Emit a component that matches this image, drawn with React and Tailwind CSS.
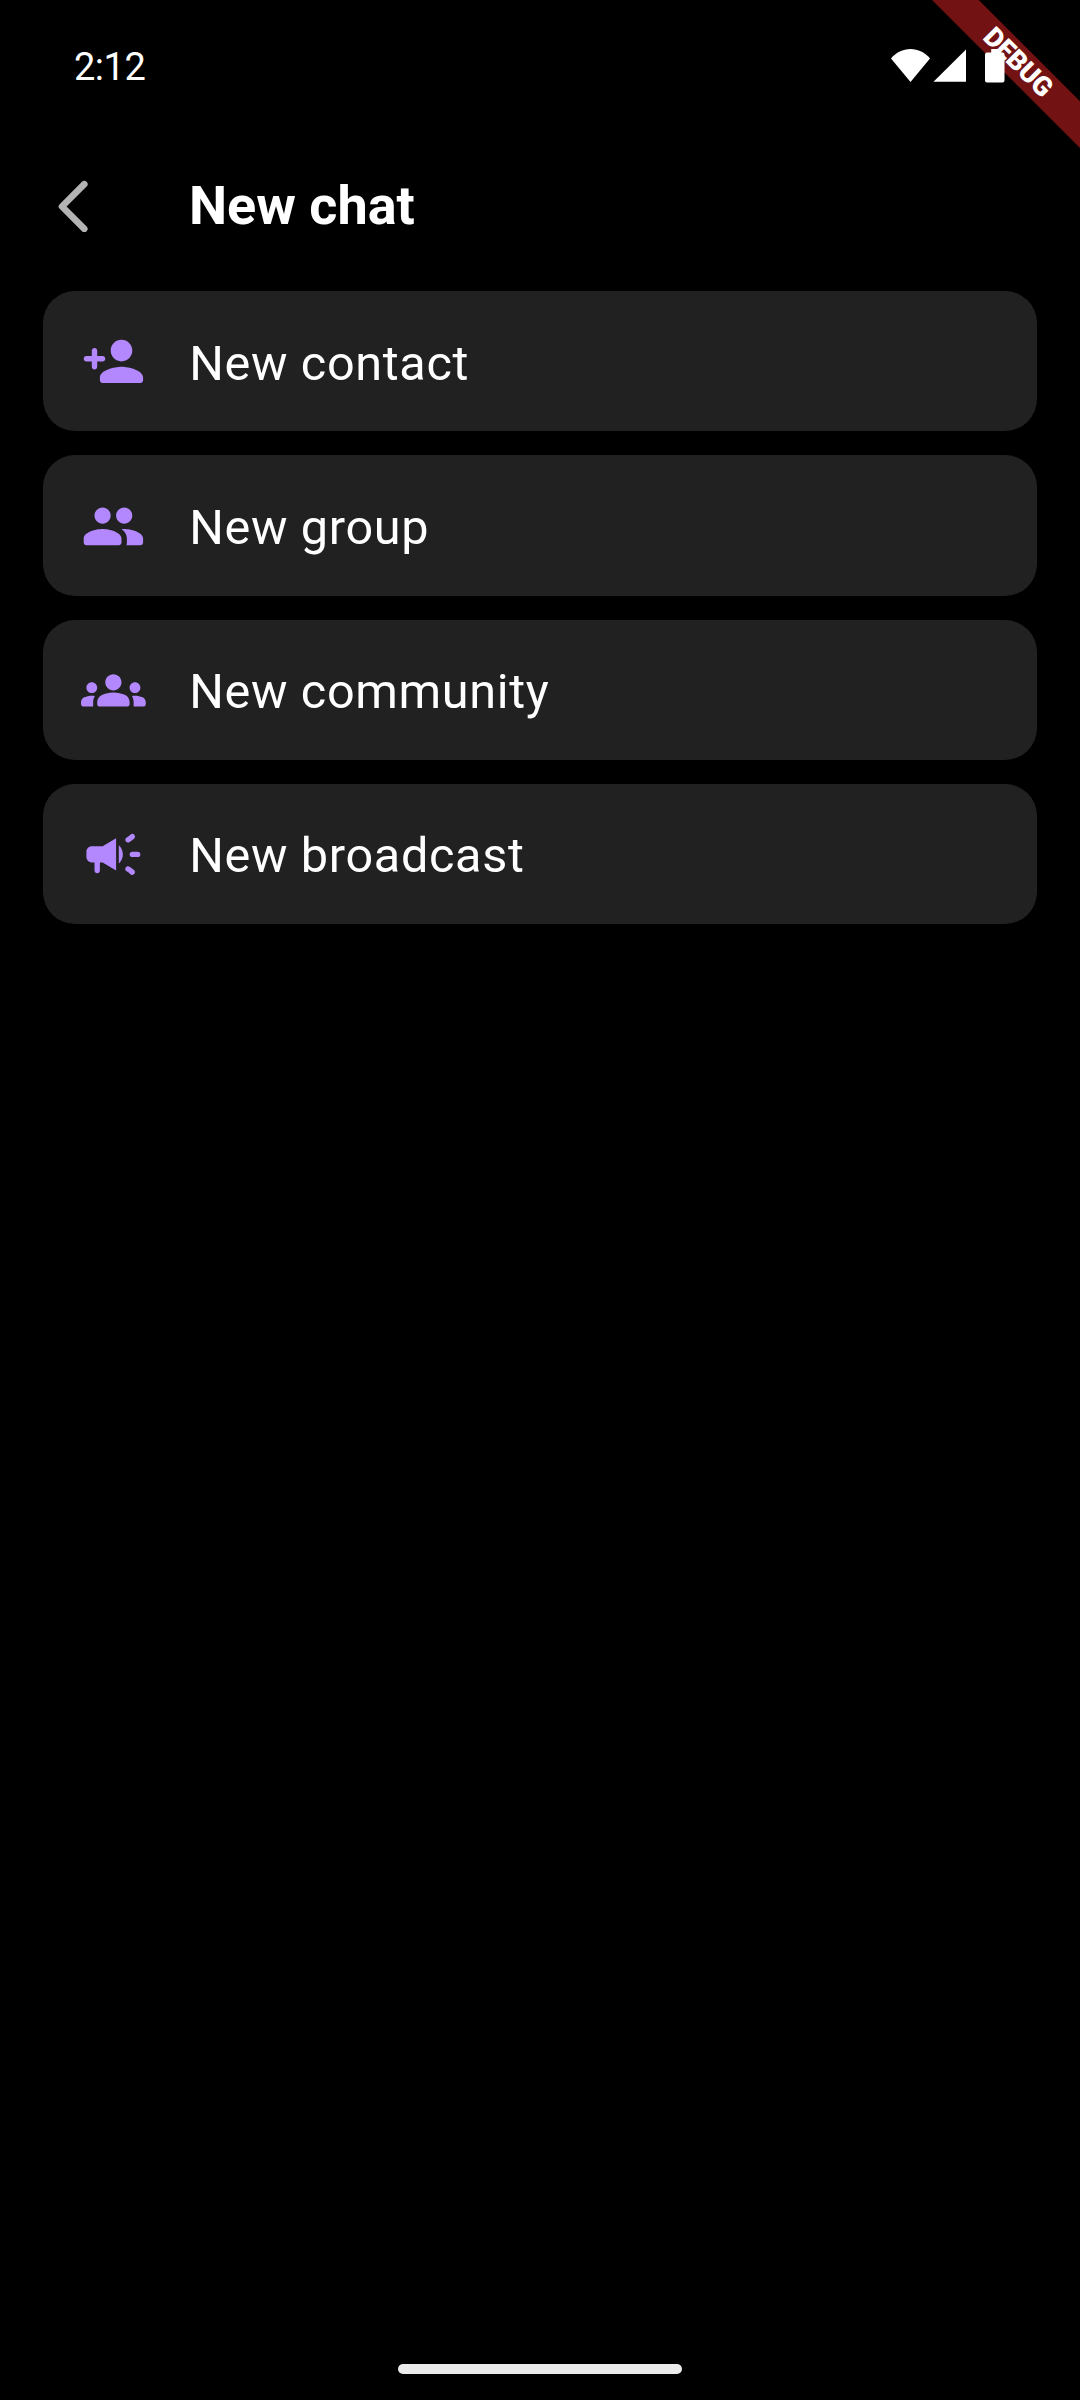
const PERSON_ADD =
  'M15 12c2.21 0 4-1.79 4-4s-1.79-4-4-4-4 1.79-4 4 1.79 4 4 4zm-9-2V8c0-.55-.45-1-1-1s-1 .45-1 1v2H2c-.55 0-1 .45-1 1s.45 1 1 1h2v2c0 .55.45 1 1 1s1-.45 1-1v-2h2c.55 0 1-.45 1-1s-.45-1-1-1H6zm9 4c-2.67 0-8 1.34-8 4v1c0 .55.45 1 1 1h14c.55 0 1-.45 1-1v-1c0-2.66-5.33-4-8-4z';
const PEOPLE =
  'M16 11c1.66 0 2.99-1.34 2.99-3S17.66 5 16 5s-3 1.34-3 3 1.34 3 3 3zm-8 0c1.66 0 2.99-1.34 2.99-3S9.66 5 8 5 5 6.34 5 8s1.34 3 3 3zm0 2c-2.33 0-7 1.17-7 3.5V18c0 .55.45 1 1 1h12c.55 0 1-.45 1-1v-1.5c0-2.33-4.67-3.5-7-3.5zm8 0c-.29 0-.62.02-.97.05.02.01.03.03.04.04 1.14.83 1.93 1.94 1.93 3.41V18c0 .35-.07.69-.18 1H22c.55 0 1-.45 1-1v-1.5c0-2.33-4.67-3.5-7-3.5z';
const GROUPS =
  'M12 12.75c1.63 0 3.07.39 4.24.9 1.08.48 1.76 1.56 1.76 2.73V17c0 .55-.45 1-1 1H7c-.55 0-1-.45-1-1v-.61c0-1.18.68-2.26 1.76-2.73 1.17-.52 2.61-.91 4.24-.91zM4 13c1.1 0 2-.9 2-2s-.9-2-2-2-2 .9-2 2 .9 2 2 2zm1.13 1.1c-.37-.06-.74-.1-1.13-.1-.99 0-1.93.21-2.78.58C.48 14.9 0 15.62 0 16.43V17c0 .55.45 1 1 1h3.5v-1.61c0-.83.23-1.61.63-2.29zM20 13c1.1 0 2-.9 2-2s-.9-2-2-2-2 .9-2 2 .9 2 2 2zm4 3.43c0-.81-.48-1.53-1.22-1.85-.85-.37-1.79-.58-2.78-.58-.39 0-.76.04-1.13.1.4.68.63 1.46.63 2.29V18H23c.55 0 1-.45 1-1v-.57zM12 6c1.66 0 3 1.34 3 3s-1.34 3-3 3-3-1.34-3-3 1.34-3 3-3z';
const CAMPAIGN =
  'M18 12c0 .55.45 1 1 1h2c.55 0 1-.45 1-1s-.45-1-1-1h-2c-.55 0-1 .45-1 1zM16.59 16.82c-.33.44-.24 1.05.2 1.37.53.39 1.09.81 1.62 1.21.44.33 1.06.24 1.38-.2 0-.01.01-.01.01-.02.33-.44.24-1.06-.2-1.38-.53-.4-1.09-.82-1.61-1.21-.44-.33-1.06-.23-1.39.21 0 .01-.01.02-.01.02zM19.81 4.81c0-.01-.01-.01-.01-.02-.33-.44-.95-.53-1.38-.2-.53.4-1.1.82-1.62 1.22-.44.33-.52.95-.19 1.38 0 .01.01.01.01.02.33.44.94.53 1.38.2.53-.39 1.09-.82 1.62-1.22.43-.32.51-.94.19-1.38zM8 9H4c-1.1 0-2 .9-2 2v2c0 1.1.9 2 2 2h1v3c0 .55.45 1 1 1s1-.45 1-1v-3h1l5 3V6L8 9zM15.5 12c0-1.33-.58-2.53-1.5-3.35v6.69c.92-.81 1.5-2.01 1.5-3.34z';

const ITEMS = [
  { label: 'New contact', icon: PERSON_ADD },
  { label: 'New group', icon: PEOPLE },
  { label: 'New community', icon: GROUPS },
  { label: 'New broadcast', icon: CAMPAIGN },
];

function StatusBar() {
  return (
    <div className="flex h-[132px] items-center justify-between pl-[74px] pr-[75px]">
      <span className="pt-px text-[38px] leading-none tracking-[-0.5px]">2:12</span>
      <svg className="h-[34px] w-[114px]" viewBox="0 0 114 34" fill="currentColor">
        <path d="M0 9.5C5 3.5 12 0 19.5 0S34 3.5 39 9.5L19.5 33z" />
        <path d="M75 0.5V32.7H42.5z" />
        <path d="M100.2 0h8.3v3.5h3q2 0 2 2v26q0 2-2 2H96q-2 0-2-2v-26q0-2 2-2h4.2z" />
      </svg>
    </div>
  );
}

function DebugBanner() {
  return (
    <div className="absolute left-[867.5px] top-[46px] flex h-[32.5px] w-[300px] rotate-45 items-center justify-center bg-[#731212]">
      <span className="text-[27px] font-black leading-none tracking-[-0.3px]">DEBUG</span>
    </div>
  );
}

function MenuItem({ label, icon }) {
  return (
    <li className="flex h-[140.25px] items-center rounded-[32px] bg-[#212121] pl-[38px] pt-[1.4px]">
      <svg className="size-[64.8px] text-[#b388ff]" viewBox="0 0 24 24" fill="currentColor">
        <path d={icon} />
      </svg>
      <span className="ml-[43.4px] pt-[4px] text-[48.6px] leading-none tracking-[0.66px]">{label}</span>
    </li>
  );
}

export default function App() {
  return (
    <div className="relative flex h-[2400px] w-[1080px] flex-col overflow-hidden bg-black font-['Roboto',sans-serif] text-white">
      <DebugBanner />
      <div className="relative">
        <StatusBar />
      </div>
      <header className="flex h-[148px] items-center pl-[57px]">
        <svg className="h-[52px] w-[32px]" viewBox="0 0 32 52" fill="none" stroke="#b3b3b3" strokeWidth="6.6" strokeLinecap="round" strokeLinejoin="round">
          <path d="M27.3 4.2 5 26.5l22.3 22.3" />
        </svg>
        <h1 className="ml-[100px] text-[54px] font-bold leading-none">New chat</h1>
      </header>
      <ul className="mx-[43px] mt-[11px] flex flex-col gap-[24px]">
        {ITEMS.map((item) => (
          <MenuItem key={item.label} {...item} />
        ))}
      </ul>
      <div className="mx-auto mb-[26px] mt-auto h-[10px] w-[284px] rounded-full bg-[#ebebeb]" />
    </div>
  );
}
